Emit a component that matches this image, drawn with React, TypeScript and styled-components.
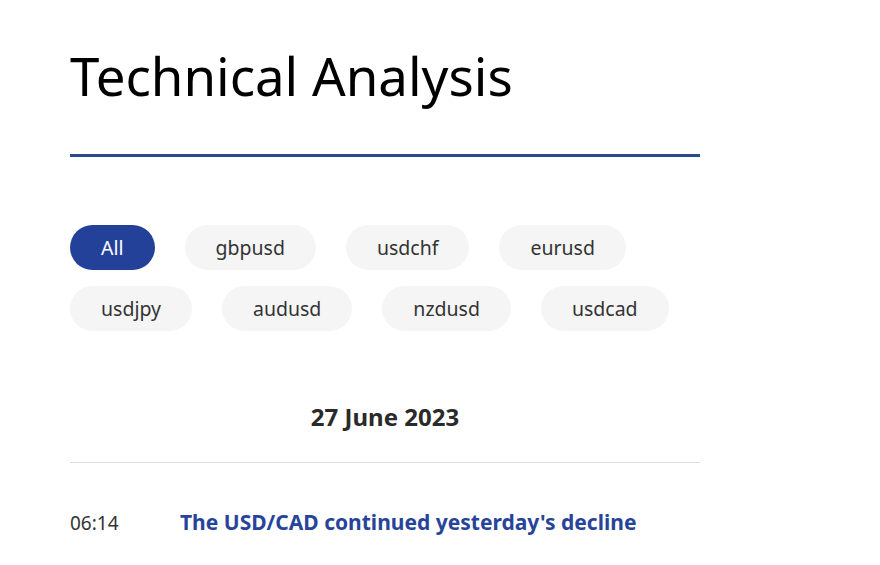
import React from "react";
import styled, { createGlobalStyle } from "styled-components";

const Global = createGlobalStyle`
  html, body { margin: 0; padding: 0; background: #fff; }
  body { font-family: "Noto Sans", "Open Sans", sans-serif; color: #222; }
`;

const Page = styled.div`
  padding: 40px 0 0 70px;
  width: 630px;
`;

const Title = styled.h1`
  margin: 0;
  font-size: 52.8px;
  font-weight: 400;
  line-height: 72px;
  color: #000;
`;

const Rule = styled.div`
  margin-top: 42px;
  height: 3px;
  background: #2b4a8f;
`;

const Chips = styled.div`
  margin-top: 68px;
  display: flex;
  flex-wrap: wrap;
  column-gap: 30px;
  row-gap: 16px;
`;

const Chip = styled.button<{ $active?: boolean }>`
  height: 45px;
  padding: 0 31px;
  border: none;
  border-radius: 23px;
  font-family: "Noto Sans", sans-serif;
  font-size: 19.5px;
  background: ${(p) => (p.$active ? "#24419a" : "#f5f5f5")};
  color: ${(p) => (p.$active ? "#fff" : "#333")};
  cursor: pointer;
`;

const DateHead = styled.h2`
  margin: 70px 0 0;
  text-align: center;
  font-size: 24px;
  font-weight: 700;
  color: #2a2a2a;
  line-height: 32px;
`;

const Divider = styled.div`
  margin-top: 29px;
  height: 1px;
  background: #dcdcdc;
`;

const Row = styled.div`
  margin-top: 44px;
  display: flex;
  align-items: baseline;
  line-height: 30px;
`;

const Time = styled.span`
  width: 110px;
  font-size: 19px;
  color: #333;
`;

const Headline = styled.a`
  font-size: 21px;
  font-weight: 700;
  color: #27449a;
  text-decoration: none;
`;

const pairs = ["All", "gbpusd", "usdchf", "eurusd", "usdjpy", "audusd", "nzdusd", "usdcad"];

export default function App() {
  return (
    <>
      <Global />
      <Page>
        <Title>Technical Analysis</Title>
        <Rule />
        <Chips>
          {pairs.map((p, i) => (
            <Chip key={p} $active={i === 0}>{p}</Chip>
          ))}
        </Chips>
        <DateHead>27 June 2023</DateHead>
        <Divider />
        <Row>
          <Time>06:14</Time>
          <Headline href="#">The USD/CAD continued yesterday's decline</Headline>
        </Row>
      </Page>
    </>
  );
}
